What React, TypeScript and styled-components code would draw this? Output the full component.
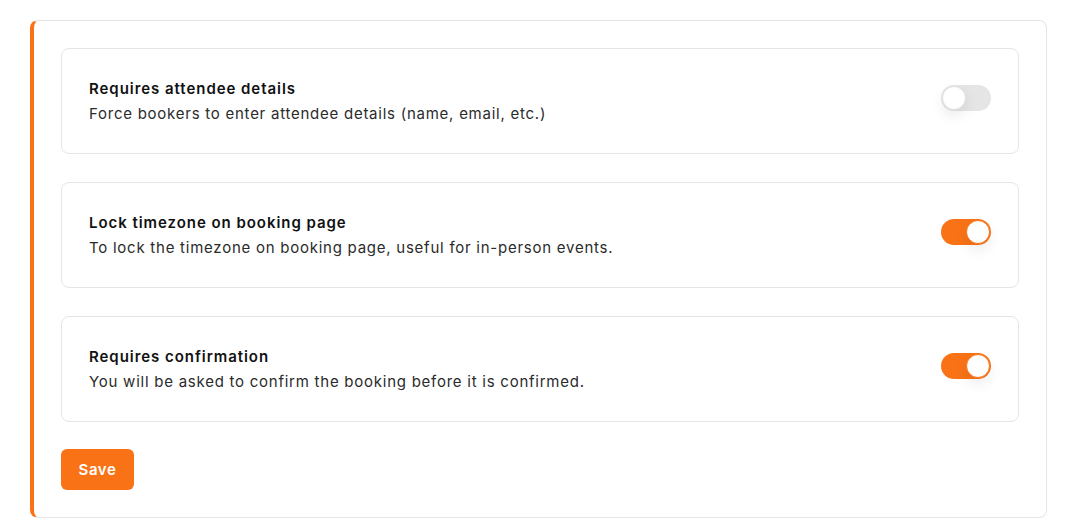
import React, { useState } from "react";
import styled, { createGlobalStyle } from "styled-components";

const Global = createGlobalStyle`
  * { box-sizing: border-box; }
  body {
    margin: 0;
    background: #ffffff;
    font-family: "Inter", "Noto Sans", sans-serif;
    -webkit-font-smoothing: antialiased;
  }
`;

const Page = styled.div`
  padding: 20px 44px 12px 30px;
`;

const Panel = styled.section`
  border: 1px solid #e5e5e5;
  border-left: 4px solid #f97316;
  border-radius: 8px;
  padding: 27px 27px 27px 27px;
  display: flex;
  flex-direction: column;
  gap: 28px;
`;

const Option = styled.div`
  border: 1px solid #e5e5e5;
  border-radius: 8px;
  height: 106px;
  padding: 0 27px 0 27px;
  display: flex;
  align-items: center;
  justify-content: space-between;
`;

const Text = styled.div`
  display: flex;
  flex-direction: column;
  gap: 5px;
`;

const Title = styled.div`
  font-size: 15px;
  line-height: 20px;
  font-weight: 600;
  color: #111111;
  letter-spacing: 0.95px;
`;

const Desc = styled.div`
  font-size: 15px;
  line-height: 20px;
  font-weight: 400;
  color: #2b2b2b;
  letter-spacing: 0.75px;
`;

const Track = styled.button<{ $on: boolean }>`
  width: 50px;
  height: 26px;
  border-radius: 13px;
  border: none;
  padding: 0;
  margin-top: -6px;
  cursor: pointer;
  background: ${(p) => (p.$on ? "#f97316" : "#e5e5e5")};
  position: relative;
  flex-shrink: 0;
`;

const Knob = styled.span<{ $on: boolean }>`
  position: absolute;
  top: 1px;
  left: ${(p) => (p.$on ? "25px" : "1px")};
  width: 24px;
  height: 24px;
  border-radius: 50%;
  background: #ffffff;
  border: 1px solid ${(p) => (p.$on ? "#f97316" : "#e0e0e0")};
  box-shadow: 0 6px 14px rgba(0, 0, 0, 0.08);
`;

const SaveButton = styled.button`
  align-self: flex-start;
  width: 73px;
  height: 41px;
  margin-top: -1px;
  border: none;
  border-radius: 6px;
  background: #f97316;
  color: #ffffff;
  font-family: "Inter", "Noto Sans", sans-serif;
  font-size: 15px;
  font-weight: 600;
  letter-spacing: 0.6px;
  cursor: pointer;
`;

const options = [
  {
    title: "Requires attendee details",
    desc: "Force bookers to enter attendee details (name, email, etc.)",
    on: false,
  },
  {
    title: "Lock timezone on booking page",
    desc: "To lock the timezone on booking page, useful for in-person events.",
    on: true,
  },
  {
    title: "Requires confirmation",
    desc: "You will be asked to confirm the booking before it is confirmed.",
    on: true,
  },
];

export default function App() {
  const [state, setState] = useState(options.map((o) => o.on));
  return (
    <Page>
      <Global />
      <Panel>
        {options.map((o, i) => (
          <Option key={o.title}>
            <Text>
              <Title>{o.title}</Title>
              <Desc>{o.desc}</Desc>
            </Text>
            <Track
              $on={state[i]}
              onClick={() => setState((s) => s.map((v, j) => (j === i ? !v : v)))}
              aria-label={o.title}
            >
              <Knob $on={state[i]} />
            </Track>
          </Option>
        ))}
        <SaveButton>Save</SaveButton>
      </Panel>
    </Page>
  );
}
